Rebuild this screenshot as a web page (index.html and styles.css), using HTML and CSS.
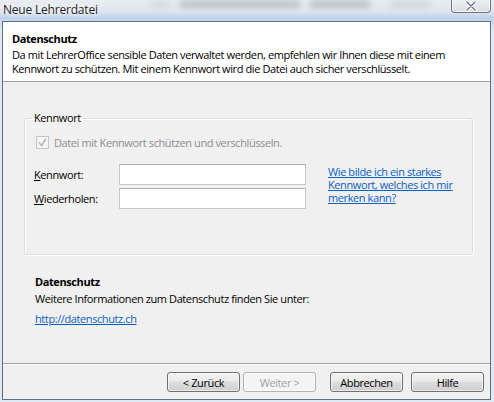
FILE: index.html
```html
<!DOCTYPE html>
<html lang="de">
<head>
<meta charset="utf-8">
<title>Neue Lehrerdatei</title>
<link rel="stylesheet" href="styles.css">
</head>
<body>
<div class="window">
  <div class="titlebar">
    <span class="blur b1"></span><span class="blur b2"></span><span class="blur b3"></span><span class="blur b4"></span>
    <span class="title">Neue Lehrerdatei</span>
    <span class="close"><svg width="16" height="10" viewBox="0 0 16 10"><path d="M4 1 L12 9 M12 1 L4 9" stroke="#fff" stroke-width="3.2" stroke-linecap="round"/><path d="M4 1 L12 9 M12 1 L4 9" stroke="#6b7280" stroke-width="1.4" stroke-linecap="round"/></svg></span>
  </div>
  <div class="client">
    <div class="header">
      <div class="h-title">Datenschutz</div>
      <div class="h-desc">Da mit LehrerOffice sensible Daten verwaltet werden, empfehlen wir Ihnen diese mit einem<br>Kennwort zu schützen. Mit einem Kennwort wird die Datei auch sicher verschlüsselt.</div>
    </div>
    <div class="body">
      <fieldset class="group">
        <legend>Kennwort</legend>
        <div class="check-row">
          <span class="checkbox"><svg width="9" height="9" viewBox="0 0 9 9"><path d="M1 4.5 L3.5 7.5 L8 1" fill="none" stroke="#b4b4b4" stroke-width="1.4"/></svg></span>
          <span class="check-label">Datei mit Kennwort schützen und verschlüsseln.</span>
        </div>
        <div class="pw-area">
          <div class="fields">
            <div class="field"><label><u>K</u>ennwort:</label><span class="input"></span></div>
            <div class="field"><label><u>W</u>iederholen:</label><span class="input"></span></div>
          </div>
          <a class="link help-link" href="#">Wie bilde ich ein starkes<br>Kennwort, welches ich mir<br>merken kann?</a>
        </div>
      </fieldset>
      <div class="info">
        <div class="info-title">Datenschutz</div>
        <div class="info-text">Weitere Informationen zum Datenschutz finden Sie unter:</div>
        <a class="link info-link" href="#">http://datenschutz.ch</a>
      </div>
    </div>
    <div class="footer">
      <span class="btn">&lt; Zurück</span>
      <span class="btn disabled">Weiter &gt;</span>
      <span class="btn wide-gap">Abbrechen</span>
      <span class="btn">Hilfe</span>
    </div>
  </div>
</div>
</body>
</html>
```
FILE: styles.css
```css
html, body {
  margin: 0;
  padding: 0;
}
body {
  width: 494px;
  height: 402px;
  overflow: hidden;
  font-family: "Open Sans", "Noto Sans", sans-serif;
  font-size: 11px;
  letter-spacing: -0.4px;
  color: #000;
  background: #dfe8f3;
}
.window {
  width: 494px;
  height: 402px;
  display: flex;
  flex-direction: column;
  background: linear-gradient(to bottom, #e9edf1 0px, #dde5ee 12px, #bcd0ea 18px, #c7d7ec 21px, #dfe8f3 30px);
}
.titlebar {
  position: relative;
  height: 21px;
  flex: none;
}
.title {
  position: absolute;
  left: 3px;
  top: 1px;
  font-size: 12px;
  letter-spacing: -0.2px;
  color: #1e1e1e;
  text-shadow: 0 0 6px #fff, 0 0 4px #fff;
}
.blur {
  position: absolute;
  top: 0;
  height: 8px;
  background: #9aa0a8;
  filter: blur(3px);
  opacity: 0.55;
}
.b1 { left: 180px; width: 120px; }
.b2 { left: 310px; width: 60px; }
.b3 { left: 390px; width: 40px; opacity: 0.25; }
.b4 { left: 150px; width: 20px; opacity: 0.2; }
.close {
  position: absolute;
  left: 451px;
  top: -1px;
  width: 38px;
  height: 13px;
  border: 1px solid #6f7480;
  border-top: none;
  border-radius: 0 0 4px 4px;
  background: linear-gradient(to bottom, #eef0f3, #d8dde3);
  display: flex;
  align-items: center;
  justify-content: center;
  box-shadow: inset 0 0 0 1px rgba(255,255,255,0.7);
}
.client {
  flex: 1;
  margin: 0 3px 2px 2px;
  border: 1px solid #5f6f82;
  background: #f0f0f0;
  display: flex;
  flex-direction: column;
  min-height: 0;
}
.header {
  height: 60px;
  box-sizing: border-box;
  background: #fff;
  border-bottom: 1px solid #a0a0a0;
  padding: 9px 0 0 9px;
}
.h-title {
  font-weight: bold;
  line-height: 16px;
}
.h-desc {
  line-height: 14px;
  margin-top: 1px;
}
.body {
  flex: 1;
  padding: 29px 0 0 21px;
  border-bottom: 1px solid #a0a0a0;
}
.group {
  margin: 0;
  width: 449px;
  height: 144px;
  box-sizing: border-box;
  border: 1px solid #d5dfe5;
  border-radius: 3px;
  padding: 10px 0 0 11px;
  box-shadow: inset 1px 1px 0 #fff, 1px 1px 0 #fff;
}
.group legend {
  padding: 0 2px;
  margin-left: -4px;
  line-height: 14px;
}
.check-row {
  display: flex;
  align-items: center;
  gap: 5px;
}
.checkbox {
  width: 11px;
  height: 11px;
  border: 1px solid #c5c5c5;
  background: #f4f4f4;
  display: flex;
  align-items: center;
  justify-content: center;
}
.check-label {
  color: #8d8d8d;
}
.pw-area {
  display: flex;
  margin-top: 14px;
}
.fields {
  display: flex;
  flex-direction: column;
  gap: 3px;
}
.field {
  display: flex;
  align-items: center;
}
.field label {
  width: 85px;
  margin-left: -2px;
}
.input {
  width: 185px;
  height: 19px;
  border: 1px solid #c3c8ce;
  border-top-color: #abadb3;
  background: #fff;
}
.link {
  color: #0a5fc3;
  text-decoration: underline;
}
.help-link {
  margin: 1px 0 0 22px;
  line-height: 13px;
}
.info {
  padding: 19px 0 0 11px;
}
.info-title {
  font-weight: bold;
  line-height: 16px;
}
.info-text {
  line-height: 18px;
}
.info-link {
  display: inline-block;
  margin-top: 3px;
}
.footer {
  height: 35px;
  flex: none;
  border-top: 1px solid #fff;
  display: flex;
  align-items: center;
  padding-left: 164px;
  box-sizing: border-box;
}
.btn {
  width: 71px;
  height: 18px;
  border: 1px solid #707070;
  border-radius: 3px;
  background: linear-gradient(to bottom, #f2f2f2 0%, #ebebeb 45%, #dddddd 50%, #cfcfcf 100%);
  display: flex;
  align-items: center;
  justify-content: center;
  margin-right: 3px;
  box-shadow: inset 0 0 0 1px rgba(255,255,255,0.6);
}
.btn.disabled {
  color: #a0a0a0;
  border-color: #adb2b5;
  background: #f4f4f4;
}
.btn.wide-gap {
  margin-left: 11px;
  margin-right: 8px;
}
```
